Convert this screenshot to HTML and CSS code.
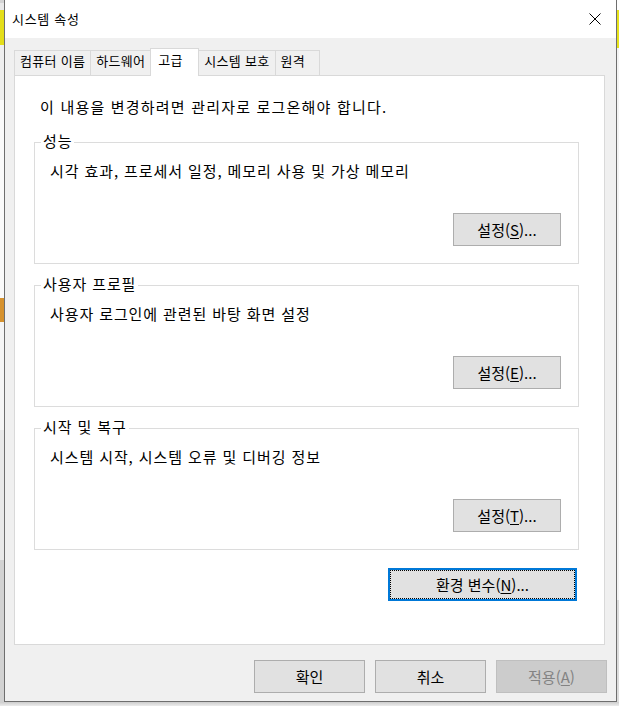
FILE: index.html
```html
<!DOCTYPE html>
<html lang="ko">
<head>
<meta charset="utf-8">
<title>시스템 속성</title>
<link rel="stylesheet" href="styles.css">
</head>
<body>
<div class="desk">
  <div class="strip-left"></div>
  <div class="window">
    <div class="titlebar">
      <span class="title">시스템 속성</span>
      <svg class="close" width="12" height="12" viewBox="0 0 12 12" aria-label="닫기">
        <path d="M0.5 0.5 L11.5 11.5 M11.5 0.5 L0.5 11.5" stroke="#000" stroke-width="1" fill="none"/>
      </svg>
    </div>
    <div class="dialog">
      <div class="tabs">
        <div class="tab">컴퓨터 이름</div>
        <div class="tab">하드웨어</div>
        <div class="tab active">고급</div>
        <div class="tab">시스템 보호</div>
        <div class="tab">원격</div>
      </div>
      <div class="panel">
        <p class="notice">이 내용을 변경하려면 관리자로 로그온해야 합니다.</p>
        <fieldset class="group first">
          <legend>성능</legend>
          <div class="group-body">
            <p class="desc">시각 효과, 프로세서 일정, 메모리 사용 및 가상 메모리</p>
            <div class="btn-row"><button class="btn btn-settings">설정(<u>S</u>)...</button></div>
          </div>
        </fieldset>
        <fieldset class="group">
          <legend>사용자 프로필</legend>
          <div class="group-body">
            <p class="desc">사용자 로그인에 관련된 바탕 화면 설정</p>
            <div class="btn-row"><button class="btn btn-settings">설정(<u>E</u>)...</button></div>
          </div>
        </fieldset>
        <fieldset class="group">
          <legend>시작 및 복구</legend>
          <div class="group-body">
            <p class="desc">시스템 시작, 시스템 오류 및 디버깅 정보</p>
            <div class="btn-row"><button class="btn btn-settings">설정(<u>T</u>)...</button></div>
          </div>
        </fieldset>
        <div class="env-row"><button class="btn btn-env">환경 변수(<u>N</u>)...</button></div>
      </div>
      <div class="footer">
        <button class="btn btn-footer">확인</button>
        <button class="btn btn-footer">취소</button>
        <button class="btn btn-footer disabled">적용(<u>A</u>)</button>
      </div>
    </div>
  </div>
  <div class="strip-right"></div>
</div>
<div class="shadow"></div>
</body>
</html>
```
FILE: styles.css
```css
* { box-sizing: border-box; }

html, body {
  margin: 0;
  padding: 0;
}

body {
  width: 619px;
  height: 706px;
  overflow: hidden;
  background: #e6e6e6;
  font-family: "Noto Sans CJK KR", "Noto Sans", sans-serif;
  color: #000;
}

.desk {
  display: flex;
  height: 702px;
}

.strip-left {
  width: 4px;
  background: linear-gradient(to bottom,
    #d4d4d4 0 3px, #e9e9e9 3px 10px, #e4de1a 10px 45px, #efefef 45px 100px,
    #fafafa 100px 298px, #d6922e 298px 322px, #f5f5f5 322px 430px,
    #e9e9e9 430px 560px, #d2d2d2 560px 702px);
}

.strip-right {
  width: 2px;
  background: linear-gradient(to bottom,
    #ffffff 0 10px, #e6e21a 10px 48px, #f3f3f3 48px 600px, #dcdcdc 600px 702px);
}

.shadow {
  height: 4px;
  background: linear-gradient(to bottom, #cdcdcd, #ececec);
}

.window {
  width: 613px;
  display: flex;
  flex-direction: column;
  background: #f0f0f0;
  border: 1px solid #6e6e6e;
  border-top: none;
}

.titlebar {
  height: 38px;
  flex: none;
  background: #fff;
  display: flex;
  align-items: center;
  justify-content: space-between;
  padding: 0 15px 0 7px;
}

.title {
  font-size: 13px;
  line-height: 16px;
  letter-spacing: 0.7px;
}

.close {
  display: block;
}

.dialog {
  flex: 1;
  display: flex;
  flex-direction: column;
  padding: 10px 8px 0 9px;
}

.tabs {
  display: flex;
  align-items: flex-end;
  height: 28px;
  margin-bottom: -1px;
}

.tab {
  height: 26px;
  min-width: 45px;
  padding: 0 5px;
  margin-right: -1px;
  border: 1px solid #d9d9d9;
  border-bottom: none;
  background: #f0f0f0;
  font-size: 13px;
  line-height: 19px;
  letter-spacing: 0.3px;
  white-space: nowrap;
}

.tab.active {
  height: 28px;
  min-width: 49px;
  padding-left: 7px;
  background: #fff;
  line-height: 21px;
  position: relative;
  z-index: 1;
}

.panel {
  flex: 1;
  display: flex;
  flex-direction: column;
  margin-right: 3px;
  background: #fff;
  border: 1px solid #d9d9d9;
  padding: 0 25px 0 19px;
}

.notice {
  margin: 21px 0 0 6px;
  font-size: 15px;
  line-height: 20px;
  letter-spacing: 1.2px;
}

.group {
  margin: 10px 0 0;
  padding: 0;
  min-width: 0;
  border: 1px solid #dcdcdc;
}

.group.first {
  margin-top: 14px;
}

.group legend {
  margin-left: 6px;
  padding: 0 2px 3px;
  font-size: 15px;
  line-height: 20px;
  letter-spacing: 0.9px;
}

.group-body {
  padding: 0 17px 17px 15px;
}

.desc {
  margin: 7px 0 0;
  font-size: 15px;
  line-height: 20px;
  letter-spacing: 0.9px;
}

.btn-row {
  display: flex;
  justify-content: flex-end;
  margin-top: 32px;
}

.btn {
  height: 33px;
  padding: 0;
  background: #e1e1e1;
  border: 1px solid #adadad;
  border-radius: 0;
  color: #000;
  font-family: inherit;
  font-size: 15px;
  line-height: 20px;
}

.btn u {
  text-underline-offset: 2px;
}

.btn-settings {
  width: 108px;
}

.env-row {
  display: flex;
  justify-content: flex-end;
  margin: 18px 2px 0 0;
}

.btn-env {
  width: 189px;
  border: 2px solid #0078d7;
  outline: 1px dotted #000;
  outline-offset: -3px;
}

.footer {
  flex: none;
  display: flex;
  justify-content: flex-end;
  gap: 10px;
  padding: 15px 1px 8px 0;
}

.btn-footer {
  width: 111px;
}

.btn-footer.disabled {
  background: #cccccc;
  border-color: #bfbfbf;
  color: #838383;
}
```
